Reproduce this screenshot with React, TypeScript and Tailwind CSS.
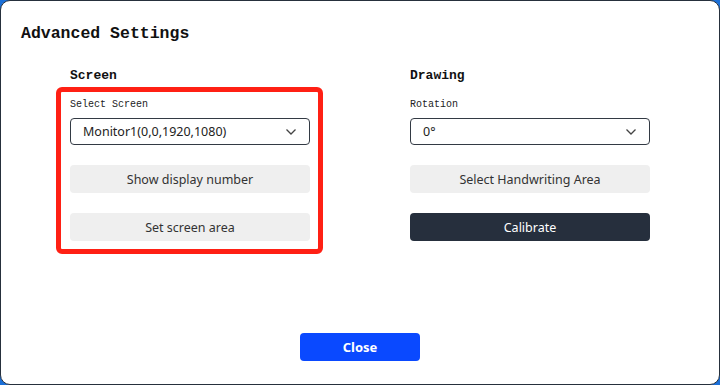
import React from "react";

const mono = { fontFamily: '"Liberation Mono", "DejaVu Sans Mono", monospace' };
const sans = { fontFamily: '"Noto Sans", "Open Sans", Arial, sans-serif' };

function Chevron() {
  return (
    <svg width="12" height="8" viewBox="0 0 12 8" fill="none" className="text-[#444]">
      <path d="M1.5 1.5L6 6L10.5 1.5" stroke="currentColor" strokeWidth="1.3" />
    </svg>
  );
}

function SelectBox({ value }: { value: string }) {
  return (
    <div
      className="flex h-[27px] w-[240px] items-center justify-between rounded-[4px] border border-[#333a44] pl-[12px] pr-[12px] text-[12.5px] text-[#222]"
      style={sans}
    >
      <span className="pt-[1px]">{value}</span>
      <Chevron />
    </div>
  );
}

function Button({ label, dark }: { label: string; dark?: boolean }) {
  return (
    <button
      className={
        dark
          ? "flex h-[28px] w-[240px] items-center justify-center rounded-[4px] bg-[#262f3d] pt-[2px] text-[12.5px] text-white"
          : "flex h-[28px] w-[240px] items-center justify-center rounded-[4px] bg-[#efefef] pt-[2px] text-[12.5px] text-[#333]"
      }
      style={sans}
    >
      {label}
    </button>
  );
}

function Column({
  heading,
  label,
  value,
  first,
  second,
  secondDark,
}: {
  heading: string;
  label: string;
  value: string;
  first: string;
  second: string;
  secondDark?: boolean;
}) {
  return (
    <div className="flex w-[240px] flex-col">
      <h3 className="text-[13px] font-bold leading-[14px] text-[#111]" style={mono}>
        {heading}
      </h3>
      <div className="mt-[16px] text-[10px] leading-[12px] text-[#222]" style={mono}>
        {label}
      </div>
      <div className="mt-[7px]">
        <SelectBox value={value} />
      </div>
      <div className="mt-[20px]">
        <Button label={first} />
      </div>
      <div className="mt-[20px]">
        <Button label={second} dark={secondDark} />
      </div>
    </div>
  );
}

export default function App() {
  return (
    <div className="h-[385px] w-[720px] bg-[#1a6fd8]">
      <div className="relative flex h-full w-full flex-col rounded-[10px] border border-[#26303c] bg-white">
        <h2 className="pl-[20px] pt-[24px] text-[16.5px] font-bold leading-[18px] text-[#111]" style={mono}>
          Advanced Settings
        </h2>

        <div className="mt-[26px] flex justify-center gap-[100px]">
          <Column
            heading="Screen"
            label="Select Screen"
            value="Monitor1(0,0,1920,1080)"
            first="Show display number"
            second="Set screen area"
          />
          <Column
            heading="Drawing"
            label="Rotation"
            value="0°"
            first="Select Handwriting Area"
            second="Calibrate"
            secondDark
          />
        </div>

        <div className="mt-auto flex justify-center pb-[23px]">
          <button
            className="flex h-[28px] w-[120px] items-center justify-center rounded-[4px] bg-[#0a49ff] pt-[2px] text-[13px] font-bold text-white"
            style={sans}
          >
            Close
          </button>
        </div>

        {/* annotation box */}
        <div className="pointer-events-none absolute left-[55px] top-[86px] h-[167px] w-[267px] rounded-[6px] border-[5px] border-[#ff2014]" />
      </div>
    </div>
  );
}
